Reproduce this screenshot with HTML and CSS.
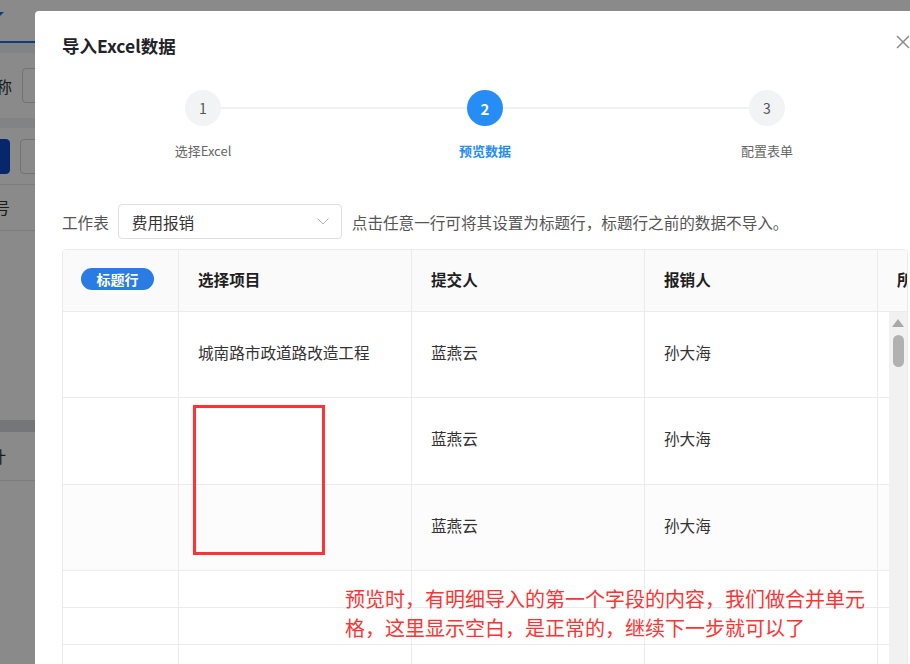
FILE: index.html
```html
<!DOCTYPE html>
<html lang="zh-CN">
<head>
    <meta charset="UTF-8">
    <meta name="viewport" content="width=device-width, initial-scale=1.0">
    <title>导入Excel数据</title>
    <link rel="stylesheet" href="styles.css">
</head>
<body>
    <!-- 背后的列表页 -->
    <div class="bg-page">
        <div class="bg-tabs"><span class="bg-tab-arrow"></span></div>
        <div class="bg-band"></div>
        <div class="bg-filter">
            <span class="bg-label">名称</span>
            <span class="bg-input"></span>
        </div>
        <div class="bg-band"></div>
        <div class="bg-actions">
            <span class="bg-btn bg-btn-primary"></span>
            <span class="bg-btn"></span>
        </div>
        <div class="bg-row bg-row-head">序号</div>
        <div class="bg-empty"></div>
        <div class="bg-band bg-band-dark"></div>
        <div class="bg-row bg-row-total">合计</div>
    </div>

    <div class="mask"></div>

    <div class="dialog">
        <h2 class="dialog-title">导入Excel数据</h2>
        <svg class="dialog-close" width="14" height="14" viewBox="0 0 14 14">
            <path d="M1 1 L13 13 M13 1 L1 13" stroke="#8c8c8c" stroke-width="1.5" fill="none"/>
        </svg>

        <div class="steps">
            <div class="step">
                <span class="step-num">1</span>
                <span class="step-label">选择Excel</span>
            </div>
            <div class="step active">
                <span class="step-num">2</span>
                <span class="step-label">预览数据</span>
            </div>
            <div class="step">
                <span class="step-num">3</span>
                <span class="step-label">配置表单</span>
            </div>
        </div>

        <div class="toolbar">
            <span class="toolbar-label">工作表</span>
            <div class="select">
                <span>费用报销</span>
                <svg width="12" height="7" viewBox="0 0 12 7">
                    <path d="M0.5 0.5 L6 6 L11.5 0.5" stroke="#b5b5b5" stroke-width="1" fill="none"/>
                </svg>
            </div>
            <span class="toolbar-hint">点击任意一行可将其设置为标题行，标题行之前的数据不导入。</span>
        </div>

        <div class="preview">
            <div class="thead">
                <div class="cell"><span class="badge">标题行</span></div>
                <div class="cell">选择项目</div>
                <div class="cell">提交人</div>
                <div class="cell">报销人</div>
                <div class="cell">所属部门</div>
            </div>
            <div class="tbody">
                <div class="rows">
                    <div class="tr tr-tall">
                        <div class="cell"></div>
                        <div class="cell">城南路市政道路改造工程</div>
                        <div class="cell">蓝燕云</div>
                        <div class="cell">孙大海</div>
                        <div class="cell"></div>
                    </div>
                    <div class="tr tr-tall tr-mid">
                        <div class="cell"></div>
                        <div class="cell"></div>
                        <div class="cell">蓝燕云</div>
                        <div class="cell">孙大海</div>
                        <div class="cell"></div>
                    </div>
                    <div class="tr tr-tall tr-hover">
                        <div class="cell"></div>
                        <div class="cell"></div>
                        <div class="cell">蓝燕云</div>
                        <div class="cell">孙大海</div>
                        <div class="cell"></div>
                    </div>
                    <div class="tr">
                        <div class="cell"></div><div class="cell"></div><div class="cell"></div><div class="cell"></div><div class="cell"></div>
                    </div>
                    <div class="tr">
                        <div class="cell"></div><div class="cell"></div><div class="cell"></div><div class="cell"></div><div class="cell"></div>
                    </div>
                    <div class="tr">
                        <div class="cell"></div><div class="cell"></div><div class="cell"></div><div class="cell"></div><div class="cell"></div>
                    </div>
                </div>
                <div class="scrollbar">
                    <span class="scroll-up"></span>
                    <span class="scroll-thumb"></span>
                </div>
            </div>
        </div>
    </div>

    <!-- 截图上的标注 -->
    <div class="note-box"></div>
    <p class="note-text">预览时，有明细导入的第一个字段的内容，我们做合并单元格，这里显示空白，是正常的，继续下一步就可以了</p>
</body>
</html>
```

FILE: styles.css
```css
body {
    margin: 0;
    width: 910px;
    height: 664px;
    overflow: hidden;
    position: relative;
    background: #fff;
    font-family: "Noto Sans CJK SC", "Noto Sans", sans-serif;
    color: #333;
}

/* 背后的页面 */
.bg-page {
    margin-left: -20px;
    width: 300px;
}
.bg-tabs {
    height: 41px;
    border-bottom: 2px solid #1e6cf0;
    position: relative;
}
.bg-tab-arrow {
    position: absolute;
    left: 16px;
    top: 12px;
    border: 4px solid transparent;
    border-top-color: #1e6cf0;
}
.bg-band {
    height: 10px;
    background: #f0f2f5;
}
.bg-band-dark {
    height: 12px;
    background: #d9dbe0;
}
.bg-filter {
    height: 65px;
    display: flex;
    align-items: center;
    gap: 10px;
    font-size: 16px;
}
.bg-input {
    width: 120px;
    height: 33px;
    border: 1px solid #d0d3d9;
    border-radius: 4px;
}
.bg-actions {
    height: 56px;
    display: flex;
    align-items: center;
    gap: 10px;
    border-bottom: 1px solid #e8e8e8;
}
.bg-btn {
    width: 48px;
    height: 33px;
    border: 1px solid #d0d3d9;
    border-radius: 4px;
}
.bg-btn-primary {
    width: 28px;
    background: #0d47c8;
    border-color: #0d47c8;
}
.bg-row {
    height: 45px;
    line-height: 45px;
    font-size: 16px;
    border-bottom: 1px solid #e8e8e8;
}
.bg-row-head {
    text-indent: -2px;
}
.bg-row-total {
    height: 48px;
    line-height: 48px;
    text-indent: -6px;
}
.bg-empty {
    height: 189px;
}
.mask {
    position: absolute;
    inset: 0;
    background: rgba(0, 0, 0, 0.46);
}

/* 弹窗 */
.dialog {
    position: absolute;
    left: 35px;
    top: 11px;
    width: 900px;
    height: 680px;
    box-sizing: border-box;
    padding: 24px 27px 0;
    background: #fff;
    border-radius: 4px;
}
.dialog-title {
    margin: 0;
    font-size: 17.5px;
    line-height: 22px;
    font-weight: 600;
    color: #1f2329;
}
.dialog-close {
    position: absolute;
    top: 24px;
    right: 25px;
}

.steps {
    display: flex;
    margin-top: 33px;
}
.step {
    flex: 1;
    display: flex;
    flex-direction: column;
    align-items: center;
    position: relative;
}
.step:not(:last-child)::after {
    content: "";
    position: absolute;
    top: 17px;
    left: 50%;
    width: 100%;
    height: 2px;
    background: #f0f1f3;
}
.step-num {
    width: 36px;
    height: 36px;
    border-radius: 50%;
    background: #f2f3f5;
    color: #555;
    font-size: 14px;
    display: flex;
    align-items: center;
    justify-content: center;
    position: relative;
    z-index: 1;
}
.step-label {
    margin-top: 15px;
    font-size: 13px;
    line-height: 20px;
    color: #666;
}
.step.active .step-num {
    background: #268cf6;
    color: #fff;
    font-weight: 700;
    font-size: 15px;
}
.step.active .step-label {
    color: #268cf6;
    font-weight: 600;
}

.toolbar {
    display: flex;
    align-items: center;
    margin-top: 43px;
    font-size: 15.6px;
    color: #555;
}
.select {
    width: 224px;
    height: 35px;
    box-sizing: border-box;
    margin-left: 9px;
    padding: 0 12px 0 13px;
    border: 1px solid #dcdfe6;
    border-radius: 4px;
    display: flex;
    align-items: center;
    justify-content: space-between;
    color: #333;
}
.toolbar-hint {
    margin-left: 10px;
}

/* 预览表格 */
.preview {
    margin-top: 10px;
    width: 846px;
    height: 420px;
    box-sizing: border-box;
    border: 1px solid #ebebeb;
    border-radius: 4px 4px 0 0;
    overflow: hidden;
    display: flex;
    flex-direction: column;
}
.thead,
.tr {
    display: grid;
    grid-template-columns: 116px 233px 233px 233px 233px;
}
.cell {
    box-sizing: border-box;
    border-right: 1px solid #ebebeb;
    padding: 0 0 6px 19px;
    display: flex;
    align-items: center;
    white-space: nowrap;
    overflow: hidden;
    font-size: 15.6px;
}
.thead {
    height: 61px;
    background: #fafafa;
    border-bottom: 1px solid #ebebeb;
}
.thead .cell {
    padding-bottom: 3px;
    font-weight: 600;
    color: #1f1f1f;
}
.thead .cell:first-child {
    padding-left: 18px;
}
.badge {
    width: 73px;
    height: 22px;
    border-radius: 11px;
    background: #2b7be4;
    color: #fff;
    font-size: 14px;
    font-weight: 700;
    display: flex;
    align-items: center;
    justify-content: center;
}
.tbody {
    flex: 1;
    display: flex;
    min-height: 0;
}
.rows {
    flex: 1;
    overflow: hidden;
}
.tr {
    height: 37px;
    box-sizing: border-box;
    border-bottom: 1px solid #ebebeb;
}
.tr-tall {
    height: 86px;
}
.tr-mid {
    height: 87px;
}
.tr-hover {
    background: #fcfcfc;
}
.scrollbar {
    width: 18px;
    background: #f1f1f1;
    display: flex;
    flex-direction: column;
    align-items: center;
    padding-top: 7px;
    gap: 8px;
}
.scroll-up {
    width: 0;
    height: 0;
    border-left: 6px solid transparent;
    border-right: 6px solid transparent;
    border-bottom: 8px solid #a8a8a8;
}
.scroll-thumb {
    width: 11px;
    height: 32px;
    border-radius: 6px;
    background: #b1b1b1;
}

/* 标注 */
.note-box {
    position: absolute;
    left: 193px;
    top: 405px;
    width: 132px;
    height: 150px;
    box-sizing: border-box;
    border: 3px solid #f33;
}
.note-text {
    position: absolute;
    left: 345px;
    top: 584px;
    width: 530px;
    margin: 0;
    font-size: 20px;
    line-height: 29px;
    color: #f33;
}
```
